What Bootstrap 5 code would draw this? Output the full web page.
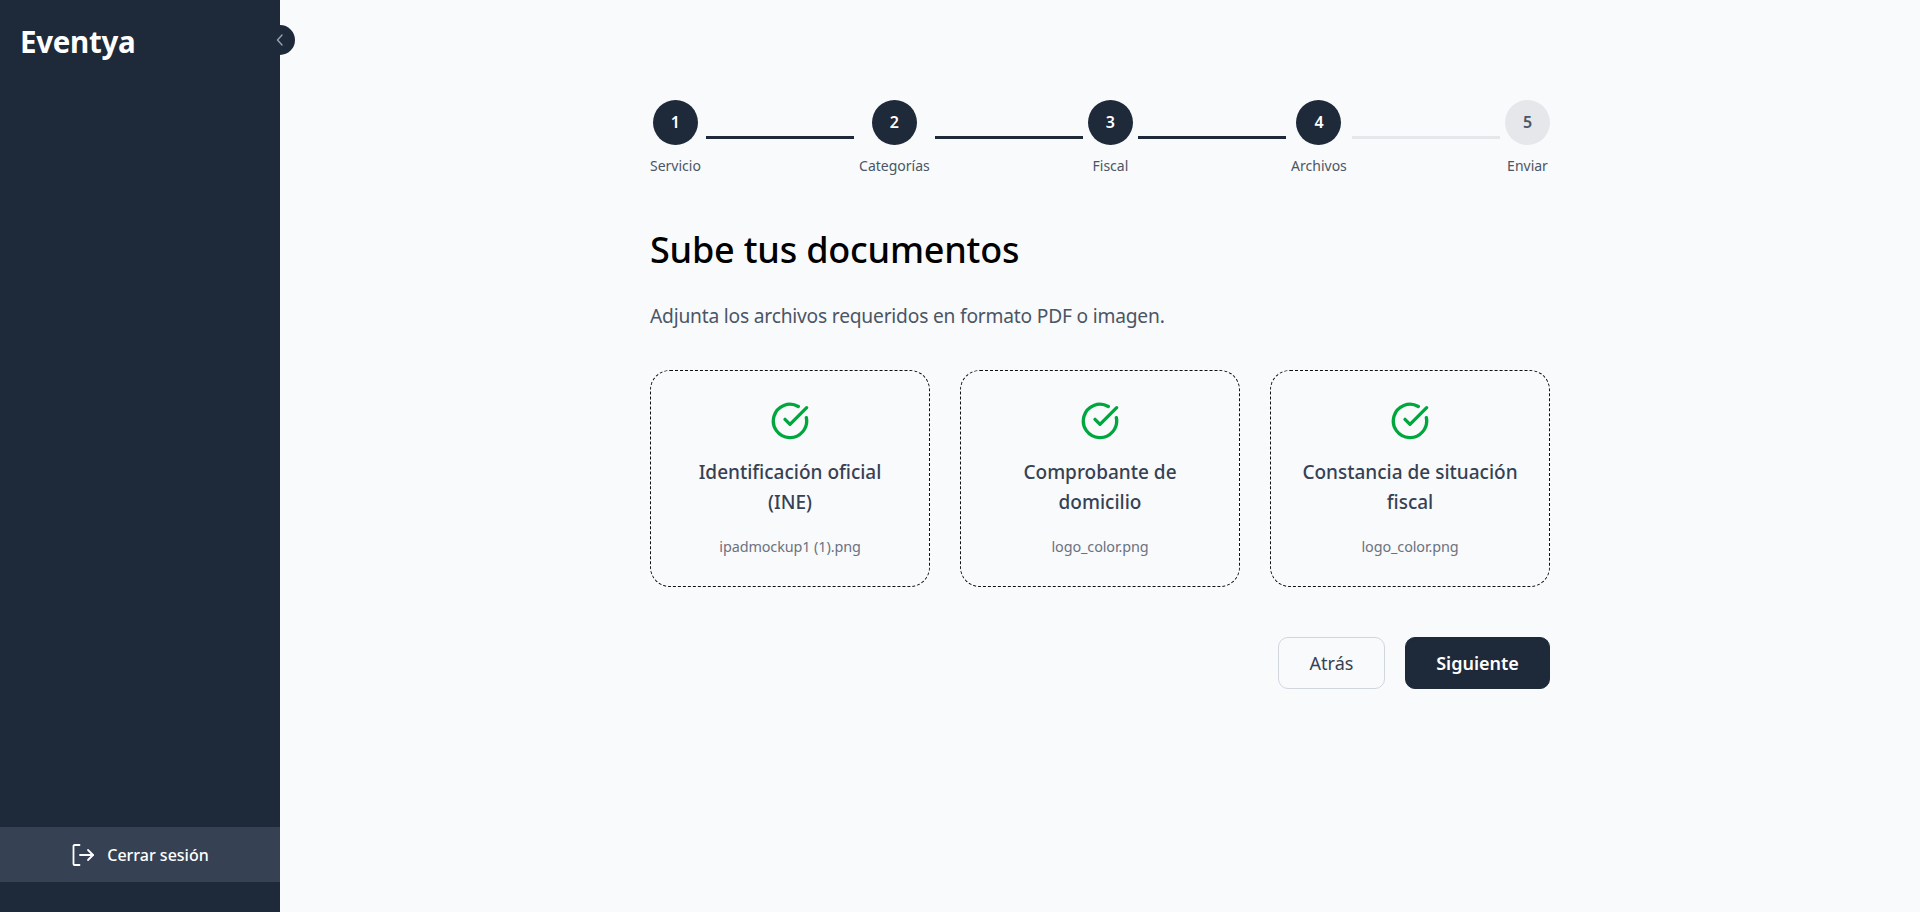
<!DOCTYPE html>
<html lang="es">
<head>
<meta charset="utf-8">
<title>Eventya</title>
<link href="https://cdn.jsdelivr.net/npm/bootstrap@5.3.0/dist/css/bootstrap.min.css" rel="stylesheet">
<style>
html,body{height:100%}
body{background:#f9fafb;font-family:"Noto Sans","Open Sans",sans-serif;overflow:hidden}
.app-shell{height:912px}
.side-panel{width:280px;flex:0 0 280px;background:#1e2939;position:relative;padding-top:21px}
.brand-name{font-size:29.5px;font-weight:700;color:#fff;line-height:42px;padding-left:20px;letter-spacing:-.3px}
.collapse-toggle{position:absolute;top:25px;right:-15px;width:30px;height:30px;border-radius:50%;background:#1e2939;border:0;padding:0;color:#99a1af}
.logout-row{position:absolute;left:0;right:0;top:827px;height:55px;background:#364153;color:#fff;font-size:16px;font-weight:500;gap:12px}
.main-area{flex:1 1 auto}
.wizard-box{width:900px;padding-top:100px}
.step-item{color:#4a5565;font-size:14px;line-height:21px}
.step-dot{width:45px;height:45px;border-radius:50%;background:#1e2939;color:#fff;font-size:16px;font-weight:600;margin-bottom:10px}
.step-dot.is-off{background:#e5e7eb;color:#4a5565}
.step-bar{flex:1 1 0;height:3px;background:#1e2939;margin:36px 5px 0}
.step-bar.is-off{background:#e5e7eb}
.page-title{font-size:36px;font-weight:500;color:#000;line-height:54px;margin:47px 0 0;letter-spacing:-.2px}
.page-sub{font-size:19.2px;line-height:28px;color:#4a5565;margin:25px 0 0;letter-spacing:-.2px}
.doc-grid{display:grid;grid-template-columns:repeat(3,280px);gap:30px;margin-top:40px}
.doc-box{height:217px;border:1px dashed #111;border-radius:20px;text-align:center;padding:30px 24px 0}
.doc-box svg{display:block;margin:0 auto 16px}
.doc-name{font-size:19px;font-weight:500;line-height:30px;color:#364153;margin-bottom:19px}
.doc-file{font-size:14.4px;line-height:21px;color:#6a7282;letter-spacing:-.1px}
.wizard-actions{margin-top:50px;gap:20px}
.btn-back,.btn-next{height:52px;border-radius:10px;font-size:18px;padding:0}
.btn-back{width:107px;background:transparent;border:1px solid #d1d5dc;color:#364153}
.btn-back:hover{background:transparent;border-color:#d1d5dc;color:#364153}
.btn-next{width:145px;background:#1e2939;border:1px solid #1e2939;color:#fff;font-weight:600}
.btn-next:hover{background:#1e2939;border-color:#1e2939;color:#fff}
</style>
</head>
<body>
<div class="app-shell d-flex">
  <aside class="side-panel">
    <div class="brand-name">Eventya</div>
    <button class="collapse-toggle d-flex align-items-center justify-content-center" type="button" aria-label="Contraer">
      <svg width="16" height="16" viewBox="0 0 16 16" fill="none" stroke="currentColor" stroke-width="1.4" stroke-linecap="round" stroke-linejoin="round"><path d="M10 3 5.5 8l4.5 5"/></svg>
    </button>
    <div class="logout-row d-flex align-items-center justify-content-center">
      <svg width="24" height="24" viewBox="0 0 24 24" fill="none" stroke="currentColor" stroke-width="1.8" stroke-linecap="round" stroke-linejoin="round"><path d="M8.5 2H3.5a1 1 0 0 0-1 1v18a1 1 0 0 0 1 1h5"/><path d="M9 12h13"/><path d="M17 7l5 5-5 5"/></svg>
      <span>Cerrar sesión</span>
    </div>
  </aside>
  <main class="main-area d-flex justify-content-center">
    <div class="wizard-box">
      <div class="d-flex align-items-start">
        <div class="step-item d-flex flex-column align-items-center"><div class="step-dot d-flex align-items-center justify-content-center">1</div><span>Servicio</span></div>
        <div class="step-bar"></div>
        <div class="step-item d-flex flex-column align-items-center"><div class="step-dot d-flex align-items-center justify-content-center">2</div><span>Categorías</span></div>
        <div class="step-bar"></div>
        <div class="step-item d-flex flex-column align-items-center"><div class="step-dot d-flex align-items-center justify-content-center">3</div><span>Fiscal</span></div>
        <div class="step-bar"></div>
        <div class="step-item d-flex flex-column align-items-center"><div class="step-dot d-flex align-items-center justify-content-center">4</div><span>Archivos</span></div>
        <div class="step-bar is-off"></div>
        <div class="step-item d-flex flex-column align-items-center"><div class="step-dot is-off d-flex align-items-center justify-content-center">5</div><span>Enviar</span></div>
      </div>
      <h1 class="page-title">Sube tus documentos</h1>
      <p class="page-sub">Adjunta los archivos requeridos en formato PDF o imagen.</p>
      <div class="doc-grid">
        <div class="doc-box">
          <svg width="40" height="40" viewBox="0 0 24 24" fill="none" stroke="#00a63e" stroke-width="2" stroke-linecap="round" stroke-linejoin="round"><path d="M21.8 10A10 10 0 1 1 17 3.3"/><path d="m9 11 3 3L22 4"/></svg>
          <div class="doc-name">Identificación oficial (INE)</div>
          <div class="doc-file">ipadmockup1 (1).png</div>
        </div>
        <div class="doc-box">
          <svg width="40" height="40" viewBox="0 0 24 24" fill="none" stroke="#00a63e" stroke-width="2" stroke-linecap="round" stroke-linejoin="round"><path d="M21.8 10A10 10 0 1 1 17 3.3"/><path d="m9 11 3 3L22 4"/></svg>
          <div class="doc-name">Comprobante de domicilio</div>
          <div class="doc-file">logo_color.png</div>
        </div>
        <div class="doc-box">
          <svg width="40" height="40" viewBox="0 0 24 24" fill="none" stroke="#00a63e" stroke-width="2" stroke-linecap="round" stroke-linejoin="round"><path d="M21.8 10A10 10 0 1 1 17 3.3"/><path d="m9 11 3 3L22 4"/></svg>
          <div class="doc-name">Constancia de situación fiscal</div>
          <div class="doc-file">logo_color.png</div>
        </div>
      </div>
      <div class="wizard-actions d-flex justify-content-end">
        <button class="btn btn-back" type="button">Atrás</button>
        <button class="btn btn-next" type="button">Siguiente</button>
      </div>
    </div>
  </main>
</div>
<script src="https://cdn.jsdelivr.net/npm/bootstrap@5.3.0/dist/js/bootstrap.bundle.min.js"></script>
</body>
</html>
